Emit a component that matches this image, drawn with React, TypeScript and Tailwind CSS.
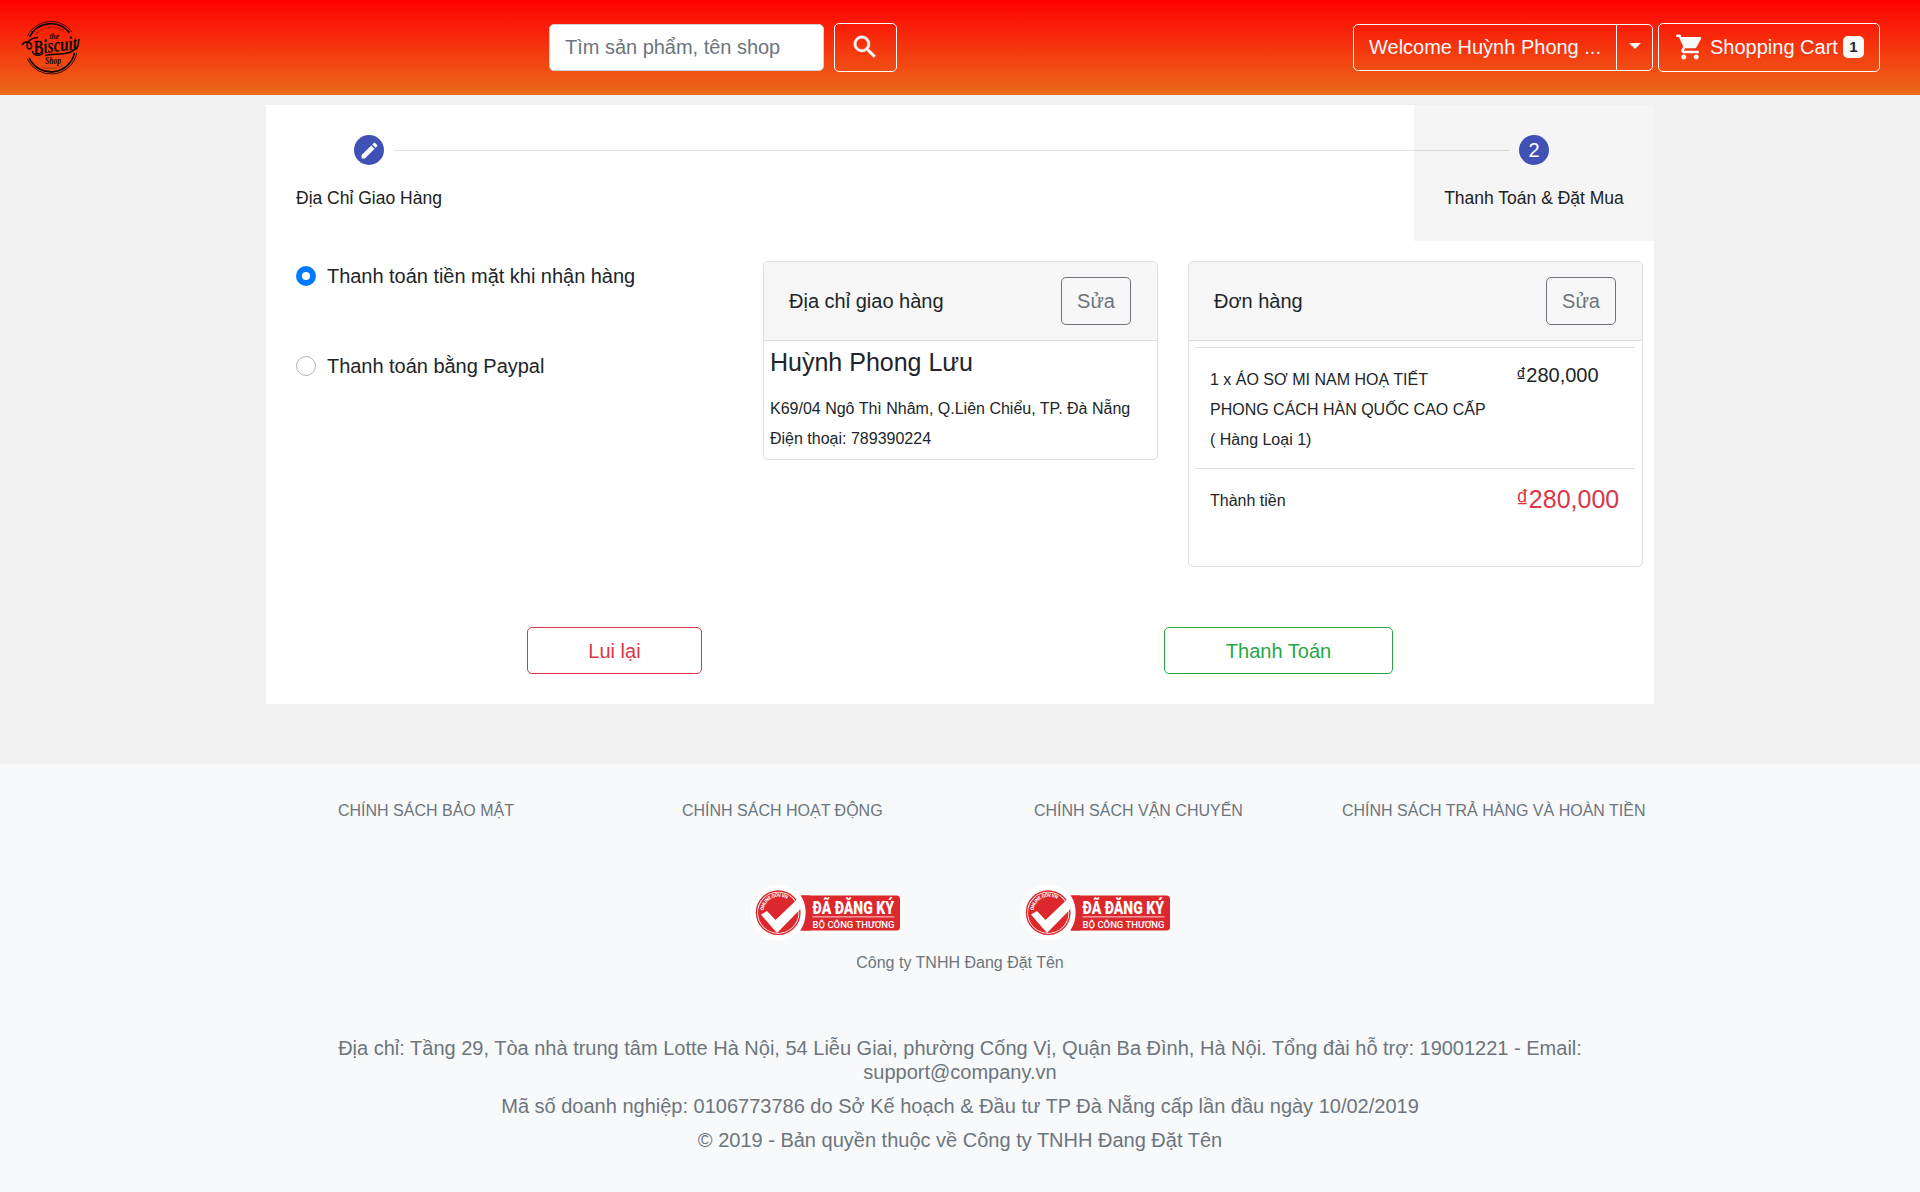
import React from 'react';

function Logo() {
  return (
    <svg className="h-[58px] w-[60px] overflow-visible" viewBox="0 0 60 58" fill="none" stroke="#140303" strokeLinecap="butt">
      <path d="M8.600 17.800A24 24 0 0 1 48.500 13.600M8.400 39.300A24 24 0 0 0 53.500 33.800" strokeWidth="1.700" />
      <path d="M6.500 17A26.300 26.300 0 0 1 51 13M6 39.500A26.300 26.300 0 0 0 55.800 33.800" strokeWidth="1" opacity=".85" />
      <path id="logo-top" d="M15 16.500A20 20 0 0 1 44 14.500" stroke="none" />
      <path id="logo-bottom" d="M20 48.500Q31 53 44 46.500" stroke="none" />
      <g fill="#140303" stroke="none" fontFamily="Liberation Serif, serif" fontStyle="italic" fontWeight="bold">
        <text fontSize="3" opacity=".6"><textPath href="#logo-top" textLength="30">SWEET AND YUMMY</textPath></text>
        <text fontSize="2.600" opacity=".6"><textPath href="#logo-bottom" textLength="23">CERTIFIED 2014</textPath></text>
        <text x="28.500" y="19.500" fontSize="8.500" textLength="9.500" lengthAdjust="spacingAndGlyphs">the</text>
        <text x="13" y="35.500" fontSize="20" textLength="44" lengthAdjust="spacingAndGlyphs" transform="rotate(-7 13 35.500)">Biscuit</text>
        <text x="24" y="45" fontSize="9.500" textLength="16" lengthAdjust="spacingAndGlyphs">Shop</text>
      </g>
      <path d="M1 26C3 22 9 22 10.500 26C11.500 31 6 31 6 27C6 22 11 18.500 17 18.500" strokeWidth="1.600" />
      <path d="M11.500 32C12 37 19 37.500 22 34M24 36.500C34 33.500 50 38 57 27L58 20" strokeWidth="1.500" />
    </svg>
  );
}

function RegisteredBadge({ id }: { id: string }) {
  return (
    <svg className="h-[58px] w-[150px] overflow-visible" viewBox="0 0 150 58">
      <path d="M50 11.500H146.500Q150 11.500 150 15V43Q150 46.500 146.500 46.500H50Q58 30 50 11.500Z" fill="#dc272d" />
      <circle cx="28.200" cy="28.700" r="28.200" fill="#fff" />
      <path d="M51.500 11.500H60V46.500H51Q60 29 51.500 11.500Z" fill="#dc272d" />
      <circle cx="28.200" cy="28.700" r="21.700" fill="none" stroke="#dc272d" strokeWidth="1.400" />
      <circle cx="28.200" cy="28.700" r="20.200" fill="#dc272d" />
      <path d="M11 30.500L17 27L25.500 36L47 15.500L50.500 17.500V25L27 49Z" fill="#fff" />
      <path id={id} d="M13.500 26.500A15.500 15.500 0 0 1 41 18.500" fill="none" />
      <text fontSize="4.800" fontFamily="Roboto, sans-serif" fontWeight="bold" fill="#fff">
        <textPath href={`#${id}`} textLength="31">ONLINE.GOV.VN</textPath>
      </text>
      <g fill="#fff" fontFamily="Roboto, sans-serif">
        <text x="62.500" y="29.500" fontSize="18" fontWeight="900" textLength="81.500" lengthAdjust="spacingAndGlyphs">ĐÃ ĐĂNG KÝ</text>
        <rect x="62.500" y="32.500" width="82" height=".800" />
        <text x="62.500" y="43.500" fontSize="9.300" fontWeight="500" textLength="82" lengthAdjust="spacingAndGlyphs">BỘ CÔNG THƯƠNG</text>
      </g>
    </svg>
  );
}

function Header() {
  return (
    <header className="flex h-[95px] items-center bg-[linear-gradient(#ff0000,#eb6a1b)] pl-[21px] pr-10 text-[#f8f9fa]">
      <Logo />
      <div className="ml-[468px] flex items-center gap-2.5">
        <input
          className="h-[47px] w-[275px] rounded-[5px] border border-[#ced4da] bg-white px-[15px] text-[20px] tracking-[-0.02px] placeholder:text-[#6c757d]"
          placeholder="Tìm sản phẩm, tên shop"
        />
        <button className="flex h-[49px] w-[63px] items-center justify-center rounded-[5px] border border-[#f8f9fa] pb-px pr-px">
          <svg className="size-[30px]" viewBox="0 0 24 24" fill="currentColor" stroke="currentColor" strokeWidth=".4">
            <path d="M15.500 14h-.79l-.28-.27A6.471 6.471 0 0 0 16 9.500 6.500 6.500 0 1 0 9.500 16c1.610 0 3.090-.59 4.230-1.570l.27.28v.79l5 4.990L20.490 19l-4.990-5zm-6 0C7.010 14 5 11.990 5 9.500S7.010 5 9.500 5 14 7.010 14 9.500 11.990 14 9.500 14z" />
          </svg>
        </button>
      </div>
      <div className="ml-auto flex items-center gap-[5px]">
        <div className="flex h-[47px] w-[300px] rounded-[5px] border border-[#f8f9fa]">
          <button className="w-[263px] whitespace-nowrap border-r border-[#f8f9fa] pb-0.5 pl-[15px] text-left">Welcome Huỳnh Phong ...</button>
          <button className="flex flex-1 items-center justify-center pb-1">
            <span className="border-x-[6px] border-t-[6px] border-x-transparent border-t-[#f8f9fa]" />
          </button>
        </div>
        <button className="flex h-[49px] w-[222px] items-center rounded-[5px] border border-[#f8f9fa] pb-px pl-4">
          <svg className="size-[30px]" viewBox="0 0 24 24" fill="currentColor">
            <path d="M7 18c-1.100 0-1.990.9-1.990 2S5.900 22 7 22s2-.9 2-2-.9-2-2-2zM1 2v2h2l3.600 7.590-1.350 2.450c-.16.28-.25.61-.25.960 0 1.100.9 2 2 2h12v-2H7.420c-.14 0-.25-.11-.25-.25l.03-.12.9-1.630h7.450c.75 0 1.410-.41 1.750-1.030l3.580-6.490A1 1 0 0 0 20.010 4H5.210l-.94-2H1zm16 16c-1.100 0-1.990.9-1.990 2s.89 2 1.990 2 2-.9 2-2-.9-2-2-2z" />
          </svg>
          <span className="ml-[5px] whitespace-nowrap pb-px">Shopping Cart</span>
          <span className="ml-[5px] flex h-[22px] w-[21px] items-center justify-center rounded-[5px] bg-[#f8f9fa] text-[15px] font-bold text-[#212529]">1</span>
        </button>
      </div>
    </header>
  );
}

function Stepper() {
  return (
    <div className="flex h-[136px] text-[17.500px] text-[#212121]">
      <div className="flex min-w-0 flex-1 flex-col pl-[30px] pt-[30px]">
        <div className="flex items-center pl-[58px]">
          <span className="flex size-[30px] items-center justify-center rounded-full bg-[#3f51b5]">
            <svg className="size-[21px]" viewBox="0 0 24 24" fill="#fff">
              <path d="M3 17.250V21h3.750L17.810 9.940l-3.750-3.750L3 17.250zM20.710 7.040a1 1 0 0 0 0-1.410l-2.340-2.340a1 1 0 0 0-1.410 0l-1.830 1.830 3.750 3.750 1.830-1.830z" />
            </svg>
          </span>
          <span className="ml-2.5 mt-px h-px flex-1 bg-[#e0e0e0]" />
        </div>
        <span className="mt-5 leading-[26px]">Địa Chỉ Giao Hàng</span>
      </div>
      <div className="flex w-[240px] flex-col bg-[#f5f5f5] pt-[30px]">
        <div className="flex items-center">
          <span className="mt-px h-px w-[95px] bg-[#d8d8d8]" />
          <span className="ml-2.5 flex size-[30px] items-center justify-center rounded-full bg-[#3f51b5] text-[20px] text-white">2</span>
        </div>
        <span className="mt-5 text-center leading-[26px]">Thanh Toán &amp; Đặt Mua</span>
      </div>
    </div>
  );
}

function PaymentOption({ label, checked }: { label: string; checked?: boolean }) {
  return (
    <label className="flex h-[30px] items-center gap-[11px]">
      {checked ? (
        <span className="flex size-5 items-center justify-center rounded-full bg-[#007bff]">
          <span className="size-2 rounded-full bg-white" />
        </span>
      ) : (
        <span className="size-5 rounded-full border border-[#adb5bd] bg-white" />
      )}
      <span className="whitespace-nowrap tracking-[-0.03px]">{label}</span>
    </label>
  );
}

function CardHeader({ title }: { title: string }) {
  return (
    <div className="flex h-[79px] items-center justify-between border-b border-[#dfdfdf] bg-[#f7f7f7] pl-[25px] pr-[26px]">
      <span>{title}</span>
      <button className="h-12 w-[70px] rounded-[5px] border border-[#6c757d] text-[#6c757d]">Sửa</button>
    </div>
  );
}

function Checkout() {
  return (
    <main className="mx-auto mt-2.5 h-[599px] w-[1388px] bg-white">
      <Stepper />
      <div className="flex h-[386px] items-start pl-[30px] pt-5">
        <div className="flex w-[467px] flex-col gap-[60px]">
          <PaymentOption label="Thanh toán tiền mặt khi nhận hàng" checked />
          <PaymentOption label="Thanh toán bằng Paypal" />
        </div>
        <section className="h-[199px] w-[395px] overflow-hidden rounded-[5px] border border-[#dfdfdf]">
          <CardHeader title="Địa chỉ giao hàng" />
          <div className="px-[6px] pt-[6px]">
            <h5 className="text-[25px] leading-[30px]">Huỳnh Phong Lưu</h5>
            <p className="mt-[17px] whitespace-nowrap text-[16px] leading-[30px]">
              K69/04 Ngô Thì Nhâm, Q.Liên Chiểu, TP. Đà Nẵng
              <br />
              Điện thoại: 789390224
            </p>
          </div>
        </section>
        <section className="ml-[30px] h-[306px] w-[455px] overflow-hidden rounded-[5px] border border-[#dfdfdf]">
          <CardHeader title="Đơn hàng" />
          <div className="ml-[6px] mr-[7px] mt-[6px]">
            <div className="flex h-[121px] border-t border-[#dee2e6] pl-[15px] pt-[17px]">
              <p className="w-[306px] whitespace-nowrap text-[16px] leading-[30px]">
                1 x ÁO SƠ MI NAM HOẠ TIẾT
                <br />
                PHONG CÁCH HÀN QUỐC CAO CẤP
                <br />( Hàng Loại 1)
              </p>
              <span className="-mt-[5px] leading-[30px]">₫280,000</span>
            </div>
            <div className="flex border-t border-[#dee2e6] pl-[15px] pt-[17px]">
              <span className="w-[306px] text-[16px] leading-[30px]">Thành tiền</span>
              <span className="-mt-0.5 text-[25px] leading-[30px] text-[#dc3545]">₫280,000</span>
            </div>
          </div>
        </section>
      </div>
      <div className="flex pl-[261px]">
        <button className="h-[47px] w-[175px] rounded-[5px] border border-[#dc3545] text-[#dc3545]">Lui lại</button>
        <button className="ml-[462px] h-[47px] w-[229px] rounded-[5px] border border-[#28a745] text-[#28a745]">Thanh Toán</button>
      </div>
    </main>
  );
}

function Footer() {
  return (
    <footer className="mt-[60px] flex h-[428px] flex-col items-center bg-[#f8f9fa] pt-[34px] text-[#6c757d]">
      <div className="grid grid-cols-[344px_352px_308px_304px] self-start whitespace-nowrap pl-[338px] text-[16px] leading-[26px]">
        <span>CHÍNH SÁCH BẢO MẬT</span>
        <span>CHÍNH SÁCH HOẠT ĐỘNG</span>
        <span>CHÍNH SÁCH VẬN CHUYỂN</span>
        <span>CHÍNH SÁCH TRẢ HÀNG VÀ HOÀN TIỀN</span>
      </div>
      <div className="mt-[60px] flex gap-[120px]">
        <RegisteredBadge id="seal-left" />
        <RegisteredBadge id="seal-right" />
      </div>
      <span className="mt-2 text-[16px] leading-[26px]">Công ty TNHH Đang Đặt Tên</span>
      <div className="mt-[60px] flex w-[1260px] flex-col gap-[10px] text-center leading-[24px]">
        <p>
          Địa chỉ: Tầng 29, Tòa nhà trung tâm Lotte Hà Nội, 54 Liễu Giai, phường Cống Vị, Quận Ba Đình, Hà Nội. Tổng đài hỗ trợ: 19001221 - Email:
          <br />
          support@company.vn
        </p>
        <p>Mã số doanh nghiệp: 0106773786 do Sở Kế hoạch &amp; Đầu tư TP Đà Nẵng cấp lần đầu ngày 10/02/2019</p>
        <p>© 2019 - Bản quyền thuộc về Công ty TNHH Đang Đặt Tên</p>
      </div>
    </footer>
  );
}

export default function App() {
  return (
    <div className="h-[1192px] w-[1920px] overflow-hidden bg-[#f1f1f1] font-['Liberation_Sans',sans-serif] text-[20px] text-[#212529]">
      <Header />
      <Checkout />
      <Footer />
    </div>
  );
}
